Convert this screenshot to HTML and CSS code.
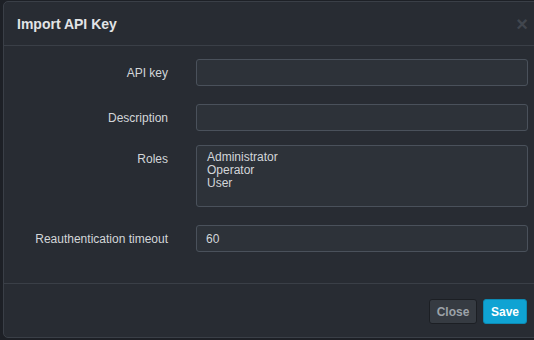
FILE: index.html
```html
<!DOCTYPE html>
<html>
<head>
<meta charset="utf-8">
<link rel="stylesheet" href="styles.css">
</head>
<body>
<div class="stage">
  <div class="modal">
    <div class="modal-header">
      <h3 class="title">Import API Key</h3>
      <span class="close-x">×</span>
    </div>
    <div class="modal-body">
      <div class="row">
        <label class="lbl">API key</label>
        <div class="input"></div>
      </div>
      <div class="row">
        <label class="lbl">Description</label>
        <div class="input"></div>
      </div>
      <div class="row top">
        <label class="lbl lbl-top">Roles</label>
        <div class="select">
          <div>Administrator</div>
          <div>Operator</div>
          <div>User</div>
        </div>
      </div>
      <div class="row">
        <label class="lbl">Reauthentication timeout</label>
        <div class="input">60</div>
      </div>
    </div>
    <div class="modal-footer">
      <button class="btn btn-close">Close</button>
      <button class="btn btn-save">Save</button>
    </div>
  </div>
</div>
</body>
</html>
```
FILE: styles.css
```css
html, body {
  margin: 0;
  padding: 0;
  background: #1d2026;
  width: 534px;
  height: 340px;
  overflow: hidden;
  font-family: "Liberation Sans", Arial, sans-serif;
}
.stage {
  padding: 1px 0 0 3px;
  display: flex;
}
.modal {
  flex: none;
  width: 540px;
  height: 337px;
  background: #282c33;
  border: 1px solid #3a3f47;
  border-radius: 5px;
  box-sizing: border-box;
  display: flex;
  flex-direction: column;
}
.modal-header {
  height: 43px;
  flex: none;
  border-bottom: 1px solid #3a3f47;
  display: flex;
  align-items: center;
  justify-content: space-between;
  padding: 0 14px 0 13px;
}
.title {
  margin: 0;
  font-size: 14px;
  font-weight: bold;
  color: #e2e4e6;
}
.close-x {
  color: #41464e;
  font-size: 20px;
  font-weight: bold;
  line-height: 1;
}
.modal-body {
  flex: none;
  padding: 13px 0 0 14px;
  display: flex;
  flex-direction: column;
  gap: 18px;
  height: 238px;
  box-sizing: border-box;
  border-bottom: 1px solid #3a3f47;
}
.row {
  display: grid;
  grid-template-columns: 150px 332px;
  column-gap: 28px;
  align-items: center;
}
.row.top { align-items: start; margin-top: -4px; }
.lbl {
  text-align: right;
  font-size: 12px;
  color: #d3d6d9;
}
.lbl-top { padding-top: 7px; }
.input {
  height: 27px;
  box-sizing: border-box;
  background: #2d3239;
  border: 1px solid #4a515b;
  border-radius: 3px;
  font-size: 12px;
  color: #d3d6d9;
  padding: 0 9px;
  display: flex;
  align-items: center;
}
.select {
  height: 62px;
  box-sizing: border-box;
  background: #2d3239;
  border: 1px solid #4a515b;
  border-radius: 3px;
  font-size: 12px;
  line-height: 13px;
  color: #d3d6d9;
  padding: 5px 10px;
}
.modal-footer {
  display: flex;
  justify-content: flex-start;
  gap: 6px;
  padding: 15px 0 0 425px;
}
.btn {
  height: 25px;
  border-radius: 3px;
  font-family: "Liberation Sans", Arial, sans-serif;
  font-size: 12px;
  font-weight: bold;
  padding: 0;
}
.btn-close {
  width: 48px;
  background: #363b42;
  border: 1px solid #1c1f24;
  color: #9ca2a8;
}
.btn-save {
  width: 44px;
  background: #0fa3d3;
  border: 1px solid #0c8ab3;
  color: #ffffff;
}
```
